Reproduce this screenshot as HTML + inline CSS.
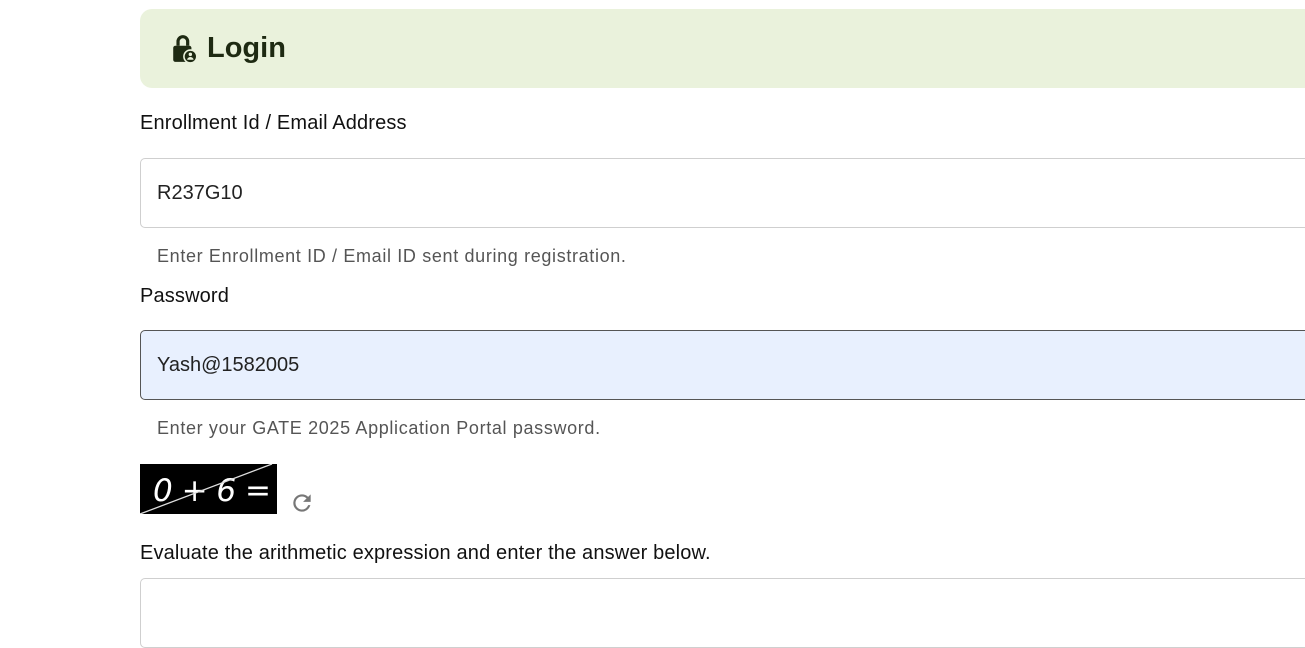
<!DOCTYPE html>
<html><head><style>
body{margin:0;width:1305px;height:648px;overflow:hidden;background:#fff;font-family:"Liberation Sans",Arial,sans-serif;position:relative}
.hdr{position:absolute;left:140px;top:9px;width:1200px;height:79px;background:#eaf2dc;border-radius:12px}
.hdr span{position:absolute;left:67px;top:23px;font-size:29px;font-weight:bold;color:#1e2a12}
.lbl{position:absolute;left:140px;font-size:20px;color:#111;letter-spacing:.15px}
.inp{position:absolute;left:140px;width:1200px;height:70px;border:1px solid #cfcfcf;border-radius:5px;box-sizing:border-box;font-size:20px;color:#222;padding-left:16px;line-height:68px}
.help{position:absolute;left:157px;font-size:18px;color:#555;letter-spacing:.65px}
</style></head><body>
<div class="hdr">
<svg style="position:absolute;left:32px;top:25px" width="26" height="30" viewBox="0 0 24 28"><path d="M4 11V7a6 6 0 0 1 12 0v4h-3V7a3 3 0 0 0-6 0v4z" fill="#1e2a12"/><rect x="1" y="11" width="17" height="15" rx="2" fill="#1e2a12"/><circle cx="17" cy="21" r="6" fill="#1e2a12" stroke="#eaf2dc" stroke-width="1.5"/><circle cx="17" cy="19" r="1.6" fill="#eaf2dc"/><path d="M14 24a3 2.5 0 0 1 6 0z" fill="#eaf2dc"/></svg>
<span>Login</span></div>
<div class="lbl" style="top:112px">Enrollment Id / Email Address</div>
<div class="inp" style="top:158px">R237G10</div>
<div class="help" style="top:246px">Enter Enrollment ID / Email ID sent during registration.</div>
<div class="lbl" style="top:285px">Password</div>
<div class="inp" style="top:330px;background:#e8f0fe;border-color:#555">Yash@1582005</div>
<div class="help" style="top:418px">Enter your GATE 2025 Application Portal password.</div>
<svg style="position:absolute;left:140px;top:464px" width="137" height="50"><rect width="137" height="50" fill="#000"/><text x="13" y="37" font-family="DejaVu Sans" font-style="italic" font-size="31" fill="#fff" textLength="118">0 + 6 =</text><line x1="0" y1="50" x2="132" y2="0" stroke="#ddd" stroke-width="1.3"/></svg>
<svg style="position:absolute;left:289px;top:490px" width="26" height="26" viewBox="0 0 24 24"><path d="M17.65 6.35A7.95 7.95 0 0 0 12 4a8 8 0 1 0 7.73 10h-2.08A6 6 0 1 1 12 6c1.66 0 3.14.69 4.22 1.78L13 11h7V4z" fill="#777"/></svg>
<div class="lbl" style="top:542px">Evaluate the arithmetic expression and enter the answer below.</div>
<div class="inp" style="top:578px"></div>
</body></html>
